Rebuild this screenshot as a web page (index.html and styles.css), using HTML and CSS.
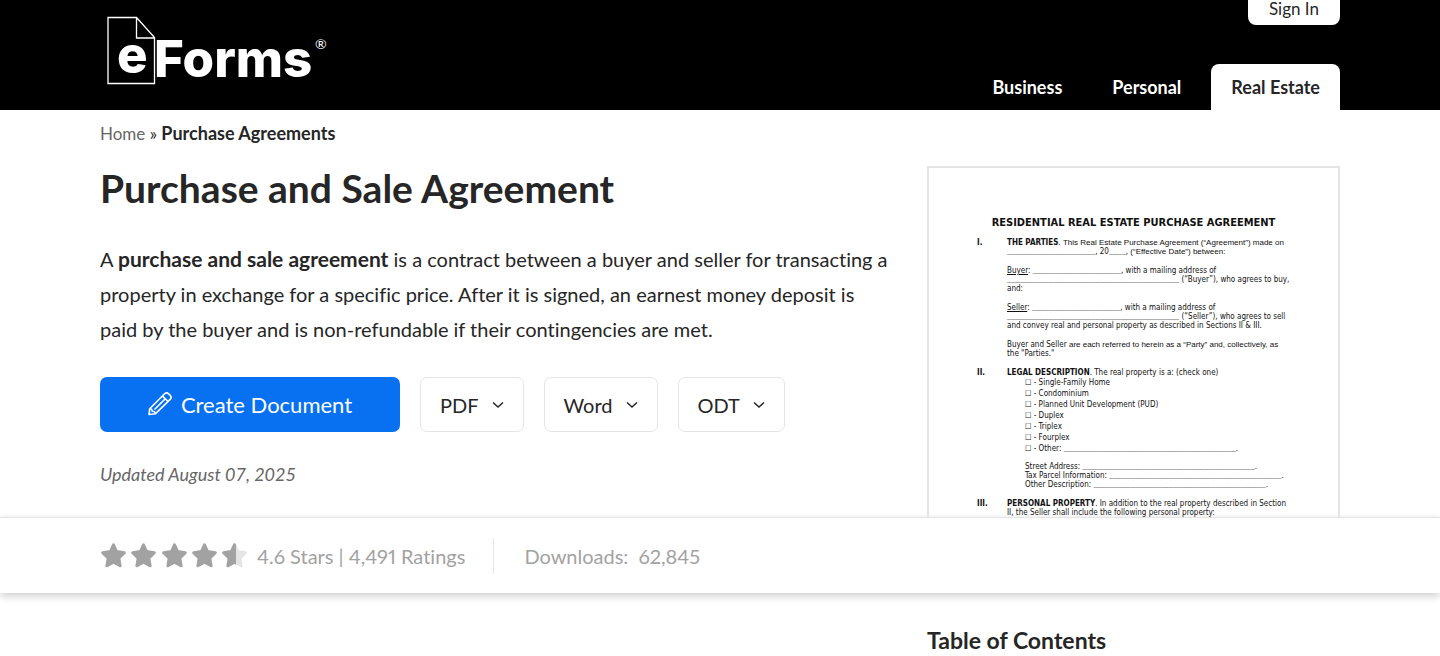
FILE: index.html
```html
<!DOCTYPE html>
<html lang="en">
  <head>
    <meta charset="UTF-8" />
    <meta name="viewport" content="width=device-width, initial-scale=1.0" />
    <title>Purchase and Sale Agreement | eForms</title>
    <link rel="stylesheet" href="styles.css">
  </head>
  <body>
    <header class="site-header">
      <div class="container header-inner">
        <a href="#" class="logo" aria-label="eForms">
          <svg width="228" height="72" viewBox="0 0 228 72">
            <path d="M1 1.500H29.500L47.500 21.500V67.500H1Z M29.500 1.500V22H47.500" fill="none" stroke="#fff" stroke-width="1.300" />
            <text class="logo-e" x="10" y="57">e</text>
            <text class="logo-forms" x="47" y="61">Forms</text>
            <text class="logo-mark" x="208" y="33">®</text>
          </svg>
        </a>
        <div class="header-right">
          <a href="#" class="sign-in">Sign In</a>
          <nav class="main-nav">
            <a href="#">Business</a>
            <a href="#">Personal</a>
            <a href="#" class="active">Real Estate</a>
          </nav>
        </div>
      </div>
    </header>

    <main>
      <!-- Hero -->
      <section class="hero container">
        <div class="hero-main">
          <nav class="breadcrumb" aria-label="Breadcrumb">
            <a href="#">Home</a> <span>»</span> <strong>Purchase Agreements</strong>
          </nav>
          <h1>Purchase and Sale Agreement</h1>
          <p class="intro">
            A <strong>purchase and sale agreement</strong> is a contract between a buyer and seller for transacting a<br />
            property in exchange for a specific price. After it is signed, an earnest money deposit is<br />
            paid by the buyer and is non-refundable if their contingencies are met.
          </p>
          <div class="actions">
            <button type="button" class="btn btn-create">
              <svg width="24" height="25" viewBox="0 0 24 25" fill="none" stroke="#fff" stroke-width="1.600" stroke-linejoin="round">
                <path d="M1 22.500L1.700 16.700L16.600 1.800Q18.600 0 20.600 1.800L22.200 3.400Q24 5.400 22.200 7.400L7.300 21.800Z" />
                <path d="M14.500 4.200L20 9.500M1.700 16.700Q4 16.500 4.200 19.200Q7.200 19 7.300 21.800M6.500 17.500L17 7" />
              </svg>
              Create Document
            </button>
            <button type="button" class="btn">PDF
              <svg class="chevron" width="12" height="8" viewBox="0 0 12 8"><path d="M1 1.500L6 6L11 1.500" /></svg>
            </button>
            <button type="button" class="btn">Word
              <svg class="chevron" width="12" height="8" viewBox="0 0 12 8"><path d="M1 1.500L6 6L11 1.500" /></svg>
            </button>
            <button type="button" class="btn">ODT
              <svg class="chevron" width="12" height="8" viewBox="0 0 12 8"><path d="M1 1.500L6 6L11 1.500" /></svg>
            </button>
          </div>
          <p class="updated">Updated August 07, 2025</p>
        </div>

        <!-- First page of the document -->
        <div class="preview">
          <h2>RESIDENTIAL REAL ESTATE PURCHASE AGREEMENT</h2>
          <div class="clause">
            <b>I.</b>
            <div>
              <p><b>THE PARTIES</b>. <span class="arial">This Real Estate Purchase Agreement (“Agreement”) made on</span><br /><span class="blank">_____________________</span>, 20<span class="blank">____</span>, <span class="arial">(“Effective Date”) between:</span></p>
              <p><u>Buyer</u>: <span class="blank">_____________________</span>, with a mailing address of<br /><span class="blank">_________________________________________</span> (“Buyer”), who agrees to buy,<br />and:</p>
              <p><u>Seller</u>: <span class="blank">_____________________</span>, with a mailing address of<br /><span class="blank">_________________________________________</span> (“Seller”), who agrees to sell<br />and convey real and personal property as described in Sections II &amp; III.</p>
              <p>Buyer and Seller <span class="arial">are each referred to herein as a “Party” and, collectively, as</span><br />the "Parties."</p>
            </div>
          </div>
          <div class="clause">
            <b>II.</b>
            <div>
              <p class="clause-title"><b>LEGAL DESCRIPTION</b>. The real property is a: (check one)</p>
              <ul>
                <li>☐ - Single-Family Home</li>
                <li>☐ - Condominium</li>
                <li>☐ - Planned Unit Development (PUD)</li>
                <li>☐ - Duplex</li>
                <li>☐ - Triplex</li>
                <li>☐ - Fourplex</li>
                <li>☐ - Other: <span class="blank">_________________________________________</span>.</li>
              </ul>
              <p class="indent">Street Address: <span class="blank">_________________________________________</span>.<br />Tax Parcel Information: <span class="blank">_________________________________________</span>.<br />Other Description: <span class="blank">_________________________________________</span>.</p>
            </div>
          </div>
          <div class="clause">
            <b>III.</b>
            <div>
              <p><b>PERSONAL PROPERTY</b>. In addition to the real property described in Section<br />II, the Seller shall include the following personal property:</p>
            </div>
          </div>
        </div>
      </section>

      <!-- Ratings bar -->
      <section class="stats">
        <div class="container stats-inner">
          <div class="rating">
            <svg width="147" height="25" viewBox="0 0 147 25">
              <defs>
                <path id="star" d="M13.500 1.800L16.600 8.600L24.300 9.700L18.800 15.100L20.100 22.800L13.500 19.200L6.900 22.800L8.200 15.100L2.700 9.700L10.400 8.600Z" stroke-width="3" stroke-linejoin="round" />
                <clipPath id="half"><rect width="15" height="25" /></clipPath>
              </defs>
              <g fill="#a2a2a2" stroke="#a2a2a2">
                <use href="#star" />
                <use href="#star" x="30" />
                <use href="#star" x="61" />
                <use href="#star" x="91" />
              </g>
              <g transform="translate(121 0)">
                <use href="#star" fill="#e4e4e4" stroke="#e4e4e4" />
                <use href="#star" fill="#a2a2a2" stroke="#a2a2a2" clip-path="url(#half)" />
              </g>
            </svg>
            <span>4.6 Stars | 4,491 Ratings</span>
          </div>
          <div class="downloads"><span>Downloads:</span> <span>62,845</span></div>
        </div>
      </section>

      <section class="content container">
        <article></article>
        <aside>
          <h2>Table of Contents</h2>
        </aside>
      </section>
    </main>
  </body>
</html>
```
FILE: styles.css
```css
:root {
  --text: #262626;
  --muted: #666;
  --gray: #a2a2a2;
  --border: #e5e5e8;
  --blue: #0871f2;
}

* {
  margin: 0;
  padding: 0;
  box-sizing: border-box;
}

body {
  font-family: Lato, "Liberation Sans", sans-serif;
  font-size: 20px;
  font-variant-ligatures: none;
  color: var(--text);
  background: #fff;
}

a {
  color: inherit;
  text-decoration: none;
}

.container {
  width: 100%;
  max-width: 1240px;
  margin: 0 auto;
}

/* Header */
.site-header {
  background: #000;
}

.header-inner {
  display: flex;
  justify-content: space-between;
  height: 110px;
}

.logo {
  padding: 16px 0 0 7px;
}

.logo svg {
  display: block;
  fill: #fff;
}

.logo-e,
.logo-forms {
  font-family: Inter, sans-serif;
  font-size: 51px;
  font-weight: 800;
}

.logo-mark {
  font-size: 14px;
}

.header-right {
  display: flex;
  flex-direction: column;
  justify-content: space-between;
  align-items: flex-end;
  font-size: 18px;
}

.sign-in {
  padding: 0 21px 8px;
  font-size: 17px;
  line-height: 17px;
  color: var(--text);
  background: #fff;
  border-radius: 0 0 8px 8px;
}

.main-nav {
  display: flex;
  gap: 10px;
}

.main-nav a {
  padding: 0 20px;
  line-height: 46px;
  font-weight: 700;
  color: #fff;
}

.main-nav .active {
  color: var(--text);
  background: #fff;
  border-radius: 8px 8px 0 0;
}

/* Hero */
.hero {
  display: grid;
  grid-template-columns: 1fr 413px;
  gap: 32px;
  height: 407px;
  overflow: hidden;
}

.breadcrumb {
  padding-top: 11px;
  font-size: 17px;
  line-height: 24px;
}

.breadcrumb a {
  color: var(--muted);
}

.breadcrumb strong {
  font-size: 18px;
}

h1 {
  margin-top: 19px;
  font-size: 39px;
  line-height: 46px;
}

.intro {
  margin-top: 30px;
  line-height: 35px;
  white-space: nowrap;
}

.intro strong {
  font-size: 21px;
}

.actions {
  display: flex;
  gap: 20px;
  margin-top: 30px;
}

.btn {
  display: flex;
  align-items: center;
  gap: 13px;
  height: 55px;
  padding: 0 19px;
  font-family: inherit;
  font-size: 20px;
  color: var(--text);
  background: #fff;
  border: 1px solid var(--border);
  border-radius: 7px;
}

.btn-create {
  justify-content: center;
  gap: 9px;
  width: 300px;
  font-size: 22px;
  color: #fff;
  background: var(--blue);
  border: none;
}

.chevron {
  fill: none;
  stroke: var(--text);
  stroke-width: 1.5;
}

.updated {
  margin-top: 30px;
  font-size: 18px;
  line-height: 24px;
  font-style: italic;
  color: var(--muted);
}

/* Document preview */
.preview {
  margin-top: 56px;
  padding: 48px 0 0 48px;
  border: 2px solid var(--border);
  font-family: "DejaVu Sans Condensed", "DejaVu Sans", sans-serif;
  font-size: 8px;
  line-height: 9px;
  color: #111;
  white-space: nowrap;
}

.preview h2 {
  margin: 0 48px 9px 0;
  font-size: 11px;
  line-height: 13px;
  text-align: center;
}

.clause {
  display: grid;
  grid-template-columns: 30px 1fr;
}

.clause p {
  margin-bottom: 10px;
}

.clause .clause-title {
  margin-bottom: 0;
}

.clause ul {
  margin-bottom: 8px;
  list-style: none;
}

.clause li {
  line-height: 11px;
}

.clause li,
.indent {
  padding-left: 18px;
}

.arial {
  font-family: "Liberation Sans", sans-serif;
}

.blank {
  font-family: "Liberation Mono", monospace;
  font-size: 7px;
  line-height: 1;
}

/* Ratings bar */
.stats {
  border-top: 1px solid var(--border);
  box-shadow: 0 3px 8px rgba(0, 0, 0, 0.2);
  color: var(--gray);
}

.stats-inner {
  display: flex;
  align-items: center;
  height: 75px;
  font-variant-numeric: proportional-nums;
}

.rating {
  display: flex;
  align-items: center;
  gap: 10px;
  padding-right: 28px;
  line-height: 36px;
  border-right: 1px solid var(--border);
}

.downloads {
  display: flex;
  gap: 10px;
  padding-left: 30px;
}

/* Content */
.content {
  display: grid;
  grid-template-columns: 1fr 413px;
  padding-top: 33px;
}

.content h2 {
  font-size: 23px;
  line-height: 28px;
}
```
